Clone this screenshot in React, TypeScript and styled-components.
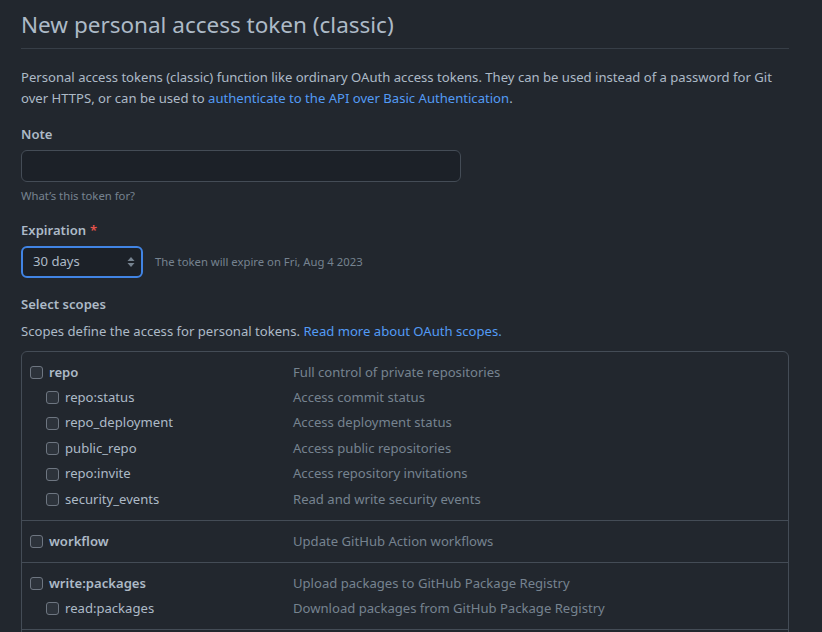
import React from "react";
import styled, { createGlobalStyle } from "styled-components";

const GlobalStyle = createGlobalStyle`
  html, body {
    margin: 0;
    padding: 0;
    background: #22272e;
  }
  body {
    font-family: "Noto Sans", "Liberation Sans", sans-serif;
    font-size: 13.1px;
    line-height: 1.5;
    color: #adbac7;
  }
  * { box-sizing: border-box; }
`;

const Page = styled.div`
  width: 822px;
  height: 632px;
  overflow: hidden;
  padding: 0 33px 0 21px;
`;

const Subhead = styled.div`
  padding-top: 10px;
  padding-bottom: 8px;
  border-bottom: 1px solid #373e47;
  margin-bottom: 18px;
`;

const Title = styled.h1`
  margin: 0;
  font-size: 22.5px;
  line-height: 30px;
  font-weight: 400;
  color: #adbac7;
`;

const Lead = styled.p`
  margin: 0 0 15px;
  line-height: 21px;
`;

const Link = styled.a`
  color: #539bf5;
  text-decoration: none;
`;

const Field = styled.div<{ $mb?: number }>`
  margin-bottom: ${(p) => p.$mb ?? 15}px;
`;

const Label = styled.div`
  font-weight: 600;
  line-height: 21px;
  margin-bottom: 5px;
`;

const Required = styled.span`
  color: #e5534b;
  margin-left: 4px;
`;

const TextInput = styled.div`
  width: 440px;
  height: 32px;
  background: #1c2128;
  border: 1px solid #444c56;
  border-radius: 6px;
`;

const Hint = styled.div`
  margin-top: 5px;
  font-size: 11.3px;
  line-height: 18px;
  color: #768390;
`;

const SelectRow = styled.div`
  display: flex;
  align-items: center;
  gap: 12px;
`;

const Select = styled.div`
  width: 122px;
  height: 32px;
  border: 2px solid #4184e4;
  border-radius: 6px;
  background: #1c2128;
  display: flex;
  align-items: center;
  justify-content: space-between;
  padding: 0 6px 0 10px;
  color: #adbac7;
`;

const InlineNote = styled.span`
  font-size: 11.3px;
  color: #768390;
`;

const SectionTitle = styled.div`
  font-weight: 600;
  line-height: 21px;
  margin-bottom: 6px;
`;

const SectionText = styled.div`
  line-height: 21px;
  margin-bottom: 9px;
`;

const ScopeBox = styled.div`
  border: 1px solid #444c56;
  border-radius: 6px;
`;

const Group = styled.div`
  padding: 7.8px 0;
  & + & {
    border-top: 1px solid #444c56;
  }
`;

const Row = styled.div`
  display: grid;
  grid-template-columns: 271px 1fr;
  height: 25.4px;
  align-items: center;
`;

const ScopeName = styled.label<{ $nested?: boolean; $strong?: boolean }>`
  display: flex;
  align-items: center;
  gap: 6px;
  padding-left: ${(p) => (p.$nested ? 24 : 8)}px;
  font-weight: ${(p) => (p.$strong ? 600 : 400)};
  color: #adbac7;
`;

const Check = styled.span`
  width: 13px;
  height: 13px;
  border: 1px solid #6e7681;
  border-radius: 3px;
  background: #2d333b;
  flex: none;
`;

const ScopeDesc = styled.span`
  color: #768390;
`;

const ArrowIcon = () => (
  <svg width="8" height="12" viewBox="0 0 8 12" fill="#768390">
    <path d="M4 1 L7.5 5 H0.5 Z" />
    <path d="M4 11 L7.5 7 H0.5 Z" />
  </svg>
);

type Scope = { name: string; desc: string; nested?: boolean };

const groups: Scope[][] = [
  [
    { name: "repo", desc: "Full control of private repositories" },
    { name: "repo:status", desc: "Access commit status", nested: true },
    { name: "repo_deployment", desc: "Access deployment status", nested: true },
    { name: "public_repo", desc: "Access public repositories", nested: true },
    { name: "repo:invite", desc: "Access repository invitations", nested: true },
    { name: "security_events", desc: "Read and write security events", nested: true },
  ],
  [{ name: "workflow", desc: "Update GitHub Action workflows" }],
  [
    { name: "write:packages", desc: "Upload packages to GitHub Package Registry" },
    { name: "read:packages", desc: "Download packages from GitHub Package Registry", nested: true },
  ],
  [{ name: "delete:packages", desc: "Delete packages from GitHub Package Registry" }],
];

export default function App() {
  return (
    <>
      <GlobalStyle />
      <Page>
        <Subhead>
          <Title>New personal access token (classic)</Title>
        </Subhead>
        <Lead>
          Personal access tokens (classic) function like ordinary OAuth access tokens. They can be used instead of a
          password for Git over HTTPS, or can be used to{" "}
          <Link href="#">authenticate to the API over Basic Authentication</Link>.
        </Lead>
        <Field>
          <Label>Note</Label>
          <TextInput />
          <Hint>What’s this token for?</Hint>
        </Field>
        <Field $mb={16}>
          <Label>
            Expiration<Required>*</Required>
          </Label>
          <SelectRow>
            <Select>
              <span>30 days</span>
              <ArrowIcon />
            </Select>
            <InlineNote>The token will expire on Fri, Aug 4 2023</InlineNote>
          </SelectRow>
        </Field>
        <SectionTitle>Select scopes</SectionTitle>
        <SectionText>
          Scopes define the access for personal tokens. <Link href="#">Read more about OAuth scopes.</Link>
        </SectionText>
        <ScopeBox>
          {groups.map((g, gi) => (
            <Group key={gi}>
              {g.map((s) => (
                <Row key={s.name}>
                  <ScopeName $nested={s.nested} $strong={!s.nested}>
                    <Check />
                    {s.name}
                  </ScopeName>
                  <ScopeDesc>{s.desc}</ScopeDesc>
                </Row>
              ))}
            </Group>
          ))}
        </ScopeBox>
      </Page>
    </>
  );
}
